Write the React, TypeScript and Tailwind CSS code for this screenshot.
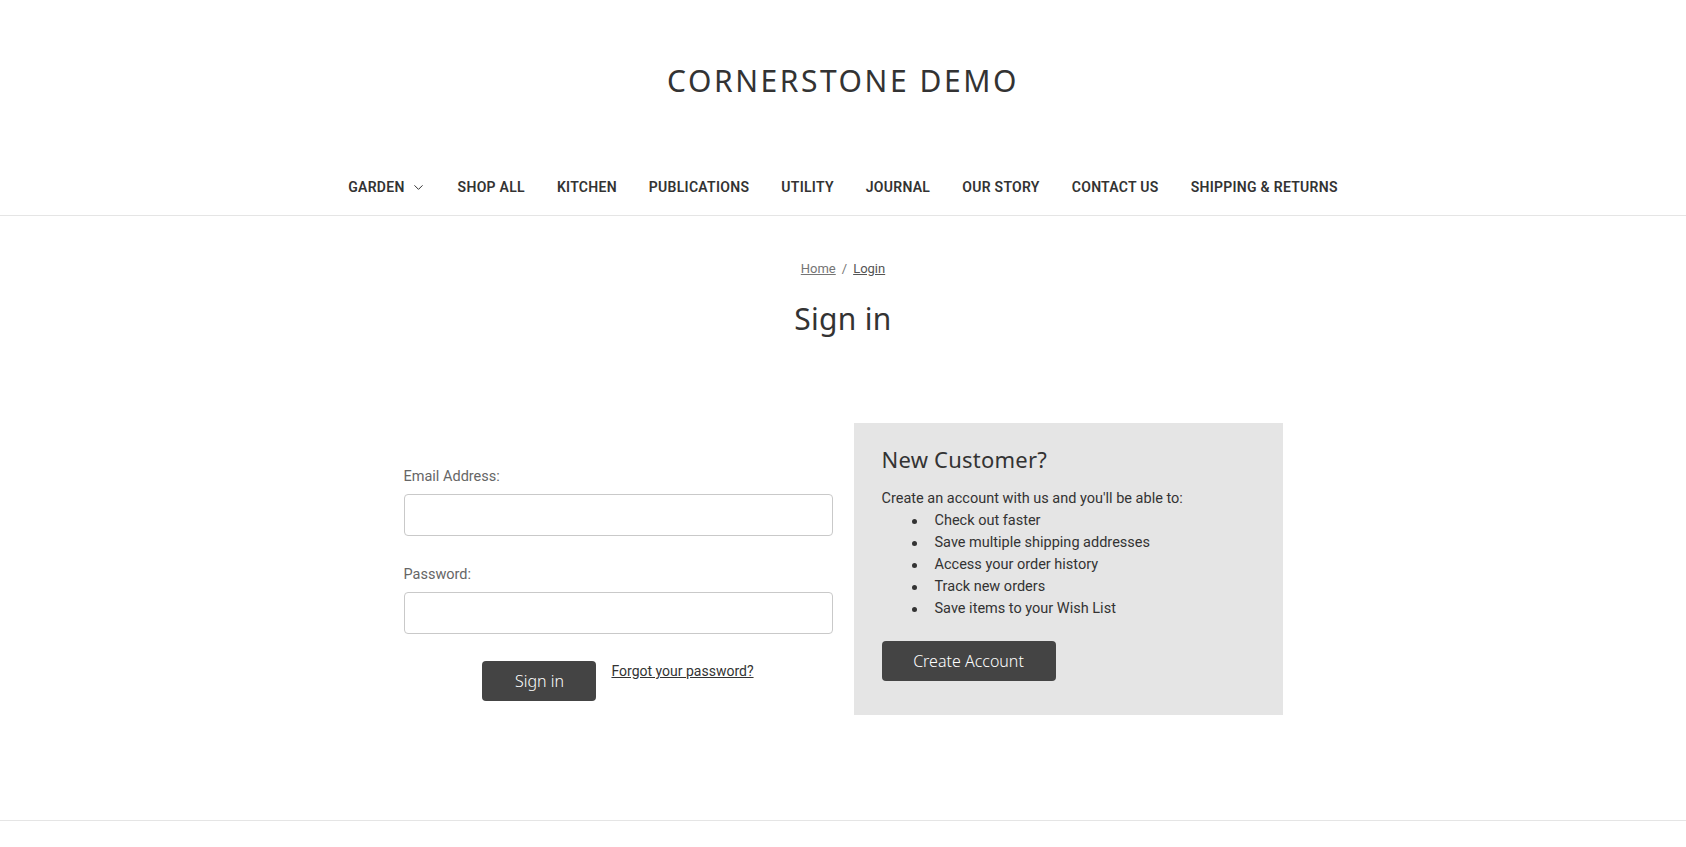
import { ChevronDown } from "lucide-react";

const heading = "font-['Noto_Sans',sans-serif]";
const body = "font-['Roboto',sans-serif]";

const navItems = [
    "SHOP ALL",
    "KITCHEN",
    "PUBLICATIONS",
    "UTILITY",
    "JOURNAL",
    "OUR STORY",
    "CONTACT US",
    "SHIPPING & RETURNS",
];

const perks = [
    "Check out faster",
    "Save multiple shipping addresses",
    "Access your order history",
    "Track new orders",
    "Save items to your Wish List",
];

export default function App() {
    return (
        <div className={`min-h-screen bg-white text-[#333] ${body}`}>
            <header className="border-b border-[#e5e5e5]">
                <div className="flex h-[162px] items-center justify-center">
                    <h1 className={`${heading} text-[30px] leading-none tracking-[0.085em] text-[#333]`}>
                        CORNERSTONE DEMO
                    </h1>
                </div>
                <nav className="flex h-[53px] items-center justify-center gap-8 pb-[2px] text-[14px] font-semibold tracking-[0.02em] text-[#333]">
                    <a className="flex items-center gap-[6px]" href="#">
                        GARDEN
                        <ChevronDown size={15} strokeWidth={1.6} color="#333" />
                    </a>
                    {navItems.map(item => (
                        <a key={item} href="#">
                            {item}
                        </a>
                    ))}
                </nav>
            </header>

            <main className="pb-[105px]">
                <div className="pt-[43px] text-center text-[13px] leading-5">
                    <a href="#" className="text-[#757575] underline">Home</a>
                    <span className="mx-[6px] text-[#757575]">/</span>
                    <a href="#" className="text-[#545454] underline">Login</a>
                </div>
                <h2 className={`${heading} mt-[22px] text-center text-[30px] leading-9 tracking-[0.01em] text-[#333]`}>
                    Sign in
                </h2>

                <div className="mx-auto mt-[86px] flex w-[879px] gap-[21px]">
                    <form className="w-[429px] pt-[44px]">
                        <label className="block text-[14.5px] leading-5 text-[#666]">Email Address:</label>
                        <input
                            type="email"
                            className="mt-[7px] block h-[42px] w-full rounded-[4px] border border-[#c9c9c9] bg-white px-3 outline-none"
                        />
                        <label className="mt-[29px] block text-[14.5px] leading-5 text-[#666]">Password:</label>
                        <input
                            type="password"
                            className="mt-[7px] block h-[42px] w-full rounded-[4px] border border-[#c9c9c9] bg-white px-3 outline-none"
                        />
                        <div className="mt-[27px] flex items-start justify-center gap-[15px]">
                            <button
                                type="button"
                                className={`${heading} h-10 w-[114px] rounded-[4px] bg-[#444] text-[16px] font-light text-white`}
                            >
                                Sign in
                            </button>
                            <a href="#" className="text-[14px] leading-5 text-[#333] underline">
                                Forgot your password?
                            </a>
                        </div>
                    </form>

                    <section className="h-[292px] w-[429px] bg-[#e5e5e5] px-[28px] pt-[22px]">
                        <h3 className={`${heading} text-[22px] leading-7 tracking-[0.01em] text-[#333]`}>New Customer?</h3>
                        <p className="mt-[15px] text-[14.5px] leading-[22px] text-[#333]">
                            Create an account with us and you'll be able to:
                        </p>
                        <ul className="pl-[30px] text-[14.5px] leading-[22px] text-[#333]">
                            {perks.map(perk => (
                                <li key={perk} className="flex items-center">
                                    <span className="mr-[18px] h-[5px] w-[5px] rounded-full bg-[#333]" />
                                    {perk}
                                </li>
                            ))}
                        </ul>
                        <button
                            type="button"
                            className={`${heading} mt-[21px] h-10 w-[174px] rounded-[4px] bg-[#444] text-[16px] font-light text-white`}
                        >
                            Create Account
                        </button>
                    </section>
                </div>
            </main>

            <footer className="border-t border-[#e5e5e5] h-[26px]" />
        </div>
    );
}
